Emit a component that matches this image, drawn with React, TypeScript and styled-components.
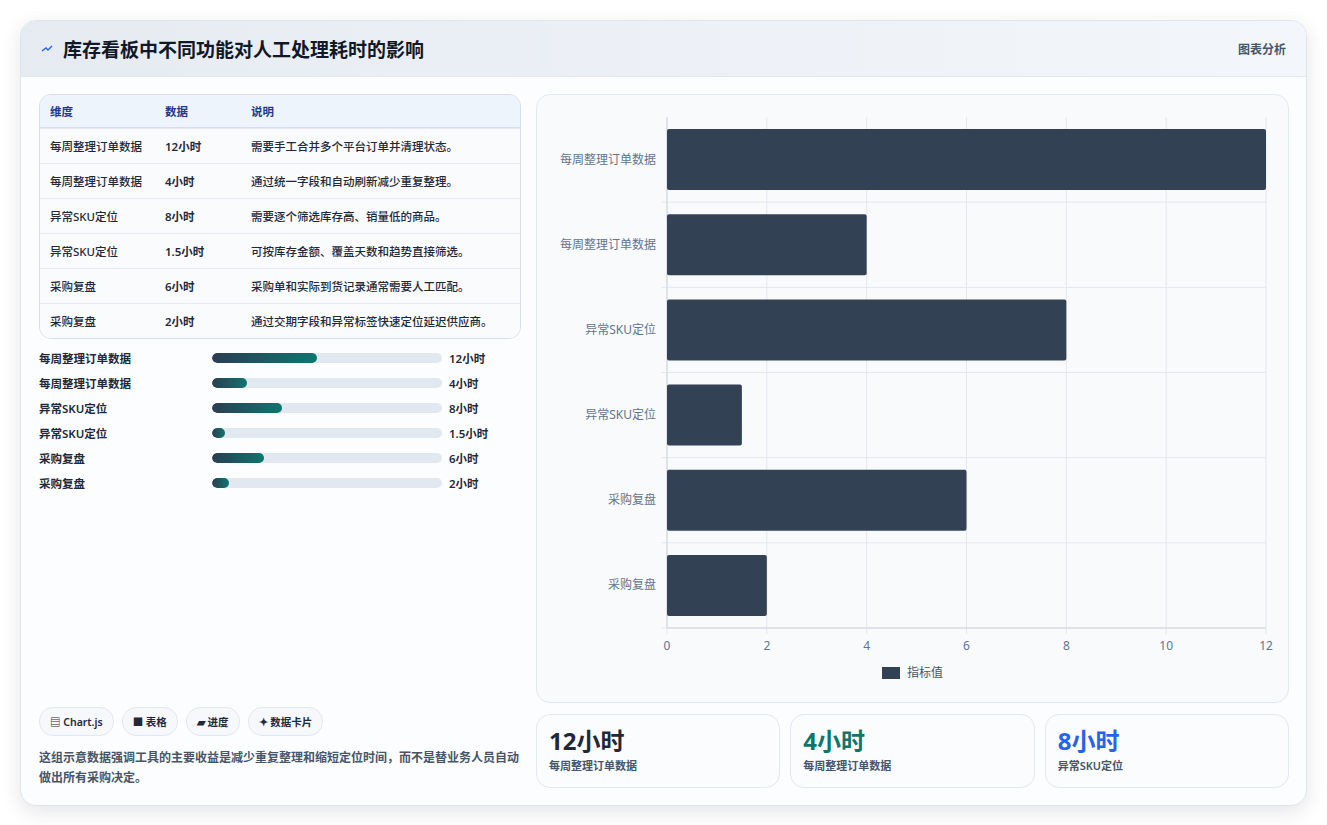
import React from 'react';
import styled, { createGlobalStyle } from 'styled-components';

const Global = createGlobalStyle`
  body { margin: 0; background: #f3f5f8; font-family: "Noto Sans", "Noto Sans CJK SC", sans-serif; }
`;

const rows = [
  { name: '每周整理订单数据', value: 12, note: '需要手工合并多个平台订单并清理状态。' },
  { name: '每周整理订单数据', value: 4, note: '通过统一字段和自动刷新减少重复整理。' },
  { name: '异常SKU定位', value: 8, note: '需要逐个筛选库存高、销量低的商品。' },
  { name: '异常SKU定位', value: 1.5, note: '可按库存金额、覆盖天数和趋势直接筛选。' },
  { name: '采购复盘', value: 6, note: '采购单和实际到货记录通常需要人工匹配。' },
  { name: '采购复盘', value: 2, note: '通过交期字段和异常标签快速定位延迟供应商。' },
];

const Page = styled.div`
  padding: 20px 20px 22px 20px;
  background: #ffffff;
`;

const Card = styled.div`
  border: 1px solid #dfe5ee;
  border-radius: 16px;
  background: #fcfdfe;
  box-shadow: 0 6px 20px rgba(30, 41, 59, 0.12);
  overflow: hidden;
`;

const Header = styled.div`
  height: 55px;
  display: flex;
  align-items: center;
  justify-content: space-between;
  padding: 0 20px;
  background: linear-gradient(90deg, #e6ebf2, #f3f6fa);
  border-bottom: 1px solid #e3e8ef;
`;

const Title = styled.h1`
  margin: 0;
  font-size: 19px;
  font-weight: 700;
  color: #111827;
  display: flex;
  align-items: center;
  gap: 10px;
`;

const Tag = styled.span`
  font-size: 12px;
  color: #475569;
  font-weight: 600;
`;

const Body = styled.div`
  display: grid;
  grid-template-columns: 482px 1fr;
  gap: 15px;
  padding: 17px 18px 17px 18px;
`;

const Left = styled.div`
  display: flex;
  flex-direction: column;
`;

const Table = styled.table`
  width: 100%;
  border-collapse: separate;
  border-spacing: 0;
  border: 1px solid #d5deea;
  border-radius: 12px;
  overflow: hidden;
  font-size: 11.5px;
`;

const Th = styled.th`
  text-align: left;
  height: 32px;
  padding: 0 10px;
  background: #edf4fc;
  color: #1e3a8a;
  font-weight: 600;
  border-bottom: 1px solid #d5deea;
`;

const Td = styled.td<{ $bold?: boolean }>`
  height: 34px;
  padding: 0 10px;
  color: #1f2937;
  font-weight: ${p => (p.$bold ? 600 : 500)};
  border-top: 1px solid #e6ebf1;
  background: #f9fbfd;
  white-space: nowrap;
`;

const Bars = styled.div`
  display: flex;
  flex-direction: column;
  gap: 7px;
  margin-top: 10px;
`;

const BarRow = styled.div`
  display: grid;
  grid-template-columns: 173px 237px 1fr;
  align-items: center;
  gap: 0;
  font-size: 11.5px;
  font-weight: 600;
  color: #1f2937;
  height: 18px;
`;

const Track = styled.div`
  height: 10px;
  border-radius: 5px;
  background: #e2e8f0;
  margin-right: 7px;
  overflow: hidden;
`;

const Fill = styled.div`
  height: 100%;
  border-radius: 5px;
  background: linear-gradient(90deg, #2b3d53, #0f766e);
`;

const Chips = styled.div`
  margin-top: auto;
  display: flex;
  gap: 8px;
`;

const Chip = styled.span`
  font-size: 10.5px;
  font-weight: 600;
  color: #1f2937;
  padding: 6px 10px;
  border: 1px solid #e2e8f0;
  border-radius: 14px;
  background: #f6f8fb;
`;

const Note = styled.p`
  margin: 12px 0 0;
  font-size: 12px;
  line-height: 20px;
  font-weight: 600;
  color: #475569;
`;

const Right = styled.div`
  display: flex;
  flex-direction: column;
  gap: 11px;
`;

const ChartPanel = styled.div`
  border: 1px solid #e2e8f0;
  border-radius: 14px;
  background: #f8fafc;
  height: 607px;
`;

const Stats = styled.div`
  display: grid;
  grid-template-columns: repeat(3, 1fr);
  gap: 10px;
`;

const Stat = styled.div`
  border: 1px solid #e2e8f0;
  border-radius: 14px;
  background: #fbfcfe;
  padding: 10px 12px;
  height: 52px;
`;

const StatValue = styled.div<{ $color: string }>`
  font-size: 24px;
  font-weight: 700;
  color: ${p => p.$color};
  line-height: 32px;
`;

const StatLabel = styled.div`
  font-size: 11px;
  font-weight: 600;
  color: #475569;
`;

const Chart = () => {
  const x0 = 130, x1 = 729, y0 = 22, y1 = 533;
  const band = (y1 - y0) / 6;
  const sx = (v: number) => x0 + ((x1 - x0) * v) / 12;
  return (
    <svg width="751" height="607" style={{ display: 'block' }}>
      {[0, 2, 4, 6, 8, 10, 12].map(t => (
        <g key={t}>
          <line x1={sx(t)} x2={sx(t)} y1={y0} y2={y1 + 6} stroke="#e3e8ee" />
          <text x={sx(t)} y={555} fontSize="12" fill="#64748b" textAnchor="middle" fontFamily="Noto Sans">{t}</text>
        </g>
      ))}
      {rows.map((_, i) => (
        <line key={i} x1={x0 - 6} x2={x1} y1={y0 + band * (i + 1)} y2={y0 + band * (i + 1)} stroke="#e3e8ee" />
      ))}
      <line x1={x0} x2={x0} y1={y0} y2={y1} stroke="#cbd5e1" />
      <line x1={x0} x2={x1} y1={y1} y2={y1} stroke="#cbd5e1" />
      {rows.map((r, i) => {
        const cy = y0 + band * i + band / 2;
        return (
          <g key={i}>
            <rect x={x0} y={cy - 30.5} width={sx(r.value) - x0} height={61} rx={2} fill="#334155" />
            <text x={x0 - 11} y={cy + 4} fontSize="12" fill="#64748b" textAnchor="end" fontFamily="Noto Sans, Noto Sans CJK SC">{r.name}</text>
          </g>
        );
      })}
      <rect x={345} y={572} width={18} height={12} fill="#334155" />
      <text x={370} y={582} fontSize="12" fill="#475569" fontFamily="Noto Sans, Noto Sans CJK SC">指标值</text>
    </svg>
  );
};

export default function App() {
  return (
    <Page>
      <Global />
      <Card>
        <Header>
          <Title>
            <svg width="12" height="10" viewBox="0 0 12 10">
              <path d="M1 7 L5 4 L7 6 L11 2" stroke="#2563eb" strokeWidth="1.4" fill="none" />
            </svg>
            库存看板中不同功能对人工处理耗时的影响
          </Title>
          <Tag>图表分析</Tag>
        </Header>
        <Body>
          <Left>
            <Table>
              <thead>
                <tr>
                  <Th style={{ width: 95 }}>维度</Th>
                  <Th style={{ width: 66 }}>数据</Th>
                  <Th>说明</Th>
                </tr>
              </thead>
              <tbody>
                {rows.map((r, i) => (
                  <tr key={i}>
                    <Td>{r.name}</Td>
                    <Td $bold>{r.value}小时</Td>
                    <Td>{r.note}</Td>
                  </tr>
                ))}
              </tbody>
            </Table>
            <Bars>
              {rows.map((r, i) => (
                <BarRow key={i}>
                  <span>{r.name}</span>
                  <Track>
                    <Fill style={{ width: `${(r.value / 12) * 45.5}%` }} />
                  </Track>
                  <span>{r.value}小时</span>
                </BarRow>
              ))}
            </Bars>
            <Chips>
              <Chip>▤ Chart.js</Chip>
              <Chip>■ 表格</Chip>
              <Chip>▰ 进度</Chip>
              <Chip>✦ 数据卡片</Chip>
            </Chips>
            <Note>这组示意数据强调工具的主要收益是减少重复整理和缩短定位时间，而不是替业务人员自动做出所有采购决定。</Note>
          </Left>
          <Right>
            <ChartPanel>
              <Chart />
            </ChartPanel>
            <Stats>
              <Stat>
                <StatValue $color="#1f2937">12小时</StatValue>
                <StatLabel>每周整理订单数据</StatLabel>
              </Stat>
              <Stat>
                <StatValue $color="#0f766e">4小时</StatValue>
                <StatLabel>每周整理订单数据</StatLabel>
              </Stat>
              <Stat>
                <StatValue $color="#2563eb">8小时</StatValue>
                <StatLabel>异常SKU定位</StatLabel>
              </Stat>
            </Stats>
          </Right>
        </Body>
      </Card>
    </Page>
  );
}
